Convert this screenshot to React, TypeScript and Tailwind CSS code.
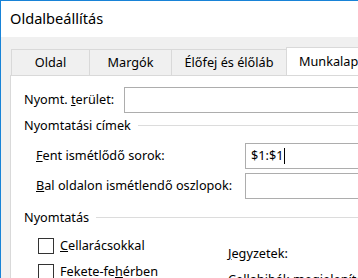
export default function App() {
  const tabs = [
    { label: "Oldal", w: "w-[78px]" },
    { label: "Margók", w: "w-[82px]" },
    { label: "Élőfej és élőláb", w: "w-[115px]" },
  ];

  return (
    <div className="w-[358px] h-[278px] overflow-hidden bg-white border-l border-t border-[#1883d7] flex flex-col text-black text-[12.7px] font-['Noto_Sans',sans-serif]">
      {/* title bar */}
      <div className="h-[36px] shrink-0 flex items-center pl-[9px] text-[14.6px]">Oldalbeállítás</div>

      {/* dialog body, wider than the window so the right side is cut */}
      <div className="flex-1 w-[430px] shrink-0 bg-[#f0f0f0] pl-[9px] pt-[10px] flex flex-col min-h-0">
        {/* tabs */}
        <div className="flex items-end h-[28px] shrink-0">
          <div className="w-[1px] h-[26px]" />
          {tabs.map((t) => (
            <div
              key={t.label}
              className={`${t.w} h-[26px] border-t border-l border-[#d9d9d9] flex items-center justify-center whitespace-nowrap`}
            >
              {t.label}
            </div>
          ))}
          <div className="flex-1 h-[28px] bg-white border-t border-l border-[#d9d9d9] flex items-center pl-[12px] whitespace-nowrap">
            Munkalap
          </div>
        </div>

        {/* panel */}
        <div className="flex-1 bg-white border-t border-l border-[#d9d9d9] pl-[13px] flex flex-col">
          <div className="flex items-center h-[26px] mt-[11px]">
            <span className="w-[100px] shrink-0 whitespace-nowrap">
              Nyomt. <u>t</u>erület:
            </span>
            <div className="flex-1 h-[26px] border border-[#adadad]" />
          </div>

          <div className="flex items-center h-[20px] mt-[3px]">
            <span className="whitespace-nowrap">Nyomtatási címek</span>
            <div className="flex-1 h-px bg-[#dcdcdc] ml-[7px] mt-[-2px]" />
          </div>

          <div className="flex items-center h-[26px] mt-[7px] pl-[12px]">
            <span className="w-[209px] shrink-0 whitespace-nowrap">
              <u>F</u>ent ismétlődő sorok:
            </span>
            <div className="flex-1 h-[26px] border border-[#adadad] flex items-center pl-[5px]">
              <span>$1:$1</span>
              <span className="w-px h-[16px] bg-black ml-[1px]" />
            </div>
          </div>

          <div className="flex items-center h-[26px] mt-[4px] pl-[12px]">
            <span className="w-[209px] shrink-0 whitespace-nowrap">
              <u>B</u>al oldalon ismétlendő oszlopok:
            </span>
            <div className="flex-1 h-[26px] border border-[#adadad]" />
          </div>

          <div className="flex items-center h-[20px] mt-[9px]">
            <span className="whitespace-nowrap">Nyomtatás</span>
            <div className="flex-1 h-px bg-[#dcdcdc] ml-[7px] mt-[-2px]" />
          </div>

          <div className="flex">
            <div className="w-[204px] shrink-0 pl-[14px] flex flex-col">
              <label className="flex items-center h-[20px] mt-[8px] whitespace-nowrap">
                <span className="w-[16px] h-[16px] border border-[#333333] bg-white mr-[6px]" />
                <span>
                  <u>C</u>ellarácsokkal
                </span>
              </label>
              <label className="flex items-center h-[20px] mt-[6px] whitespace-nowrap">
                <span className="w-[16px] h-[16px] border border-[#333333] bg-white mr-[6px]" />
                <span>
                  Fekete-fe<u>h</u>érben
                </span>
              </label>
            </div>
            <div className="flex flex-col whitespace-nowrap">
              <span className="h-[20px] mt-[16px] flex items-center">
                <span>
                  <u>J</u>egyzetek:
                </span>
              </span>
              <span className="h-[20px] mt-[6px] flex items-center">Cellahibák megjelenítése:</span>
            </div>
          </div>
        </div>
      </div>
    </div>
  );
}
